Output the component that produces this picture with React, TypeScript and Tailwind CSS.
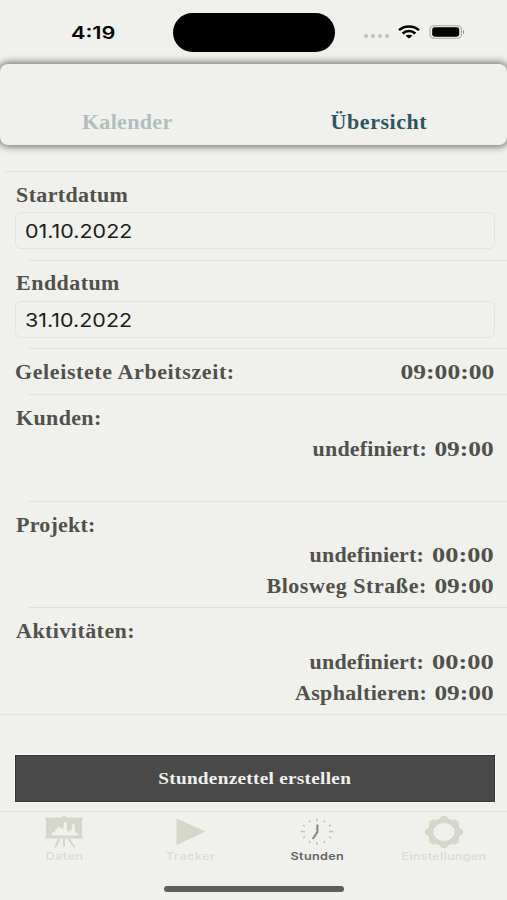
import type { ReactNode } from "react";
import clsx from "clsx";

interface Entry {
  name: string;
  nameClass: string;
  time: string;
  timeClass: string;
}

interface SummaryProps {
  title: string;
  titleClass: string;
  entries: Entry[];
}

interface DateRowProps {
  label: string;
  labelClass: string;
  value: string;
  first?: boolean;
}

interface TabProps {
  label: string;
  labelClass: string;
  active?: boolean;
  children: ReactNode;
}

const GEAR_TEETH = [0, 45, 90, 135, 180, 225, 270, 315];

function Divider({ first }: { first?: boolean }) {
  return <div className={clsx("h-px bg-[#e2e3de]", first ? "ml-1" : "ml-7")} />;
}

function StatusBar() {
  return (
    <div className="flex h-[63px] items-center">
      <div className="w-[173px] pl-[71px]">
        <span className="inline-block origin-left scale-x-[1.24] font-[Inter,sans-serif] text-[17.5px] leading-[26px] font-semibold text-black">
          4:19
        </span>
      </div>
      <div className="mt-[1px] h-[39px] w-[162px] rounded-full bg-black" />
      <div className="ml-[29px] flex gap-[3px] pt-[9px]">
        <span className="size-1 rounded-full bg-[#c0c1bd]" />
        <span className="size-1 rounded-full bg-[#c0c1bd]" />
        <span className="size-1 rounded-full bg-[#c0c1bd]" />
        <span className="size-1 rounded-full bg-[#c0c1bd]" />
      </div>
      <svg className="ml-[9px] h-[14px] w-[22px]" viewBox="0 0 22 14" fill="none" stroke="#000" strokeWidth="2.4">
        <path d="M1 5.2C6.5 .2 15.5 .2 21 5.2" />
        <path d="M4.6 8.5C8.2 5.2 13.8 5.2 17.4 8.5" />
        <path d="M11 13.4L7.6 10.8C9.5 9.3 12.5 9.3 14.4 10.8Z" fill="#000" stroke="none" />
      </svg>
      <svg className="ml-[9px] h-[14px] w-[37px]" viewBox="0 0 37 14">
        <rect x="1" y=".7" width="31.5" height="12.6" rx="4" fill="none" stroke="#a5a6a2" strokeWidth="1.1" />
        <rect x="3.2" y="2.3" width="27" height="9.4" rx="2.4" fill="#000" />
        <path d="M34 5v4c1.6-.6 1.6-3.4 0-4z" fill="#8e8f8b" />
      </svg>
    </div>
  );
}

function DateRow({ label, labelClass, value, first }: DateRowProps) {
  return (
    <section className="h-[88.5px]">
      <Divider first={first} />
      <div className="pt-[7.5px] pr-[12px] pl-[15px]">
        <h2 className={clsx("origin-left scale-x-110 pl-[1px] leading-[30px]", labelClass)}>{label}</h2>
        <div className="mt-[2.5px] flex h-[37px] items-center rounded-md border border-[#e3e4df] pt-[4px] pl-[9px]">
          <span className="origin-left scale-x-[1.13] font-[Inter,sans-serif] text-[19px] font-normal text-[#1c1c1a]">
            {value}
          </span>
        </div>
      </div>
    </section>
  );
}

function Summary({ title, titleClass, entries }: SummaryProps) {
  return (
    <section className="h-[106.7px]">
      <Divider />
      <div className="pt-2 pr-[13px] pl-[15px] leading-[30.6px]">
        <h2 className={clsx("origin-left scale-x-110 pl-[1px]", titleClass)}>{title}</h2>
        {entries.map((entry) => (
          <p key={entry.name} className="flex justify-end">
            <span className={clsx("origin-right scale-x-110", entry.nameClass)}>{entry.name}:</span>
            <span className={clsx("origin-right", entry.timeClass)}>{entry.time}</span>
          </p>
        ))}
      </div>
    </section>
  );
}

function Tab({ label, labelClass, active, children }: TabProps) {
  return (
    <div className="flex flex-1 flex-col items-center pt-1">
      {children}
      <span
        className={clsx(
          "scale-x-[1.15] font-[Inter,sans-serif] text-[11px] leading-[14px] font-semibold",
          active ? "text-[#65665a]" : "text-[#dcddd3]",
          labelClass,
        )}
      >
        {label}
      </span>
    </div>
  );
}

export default function App() {
  return (
    <div className="flex h-[900px] w-[507px] flex-col overflow-hidden bg-[#f0f1ec] font-['Liberation_Serif',serif] text-[20px] font-bold text-[#50514d]">
      <StatusBar />

      {/* Top tabs */}
      <div className="mt-[1px] flex h-[81px] shrink-0 items-end rounded-lg pb-[8px] shadow-[0_0_7px_2px_rgba(0,0,0,0.5)]">
        <div className="flex-1 pl-[2px] text-center leading-[30px] text-[#afbfbf]">
          <span className="inline-block scale-x-110 tracking-[0.3px]">Kalender</span>
        </div>
        <div className="flex-1 pr-[3px] text-center leading-[30px] text-[#2e5662]">
          <span className="inline-block scale-x-110 tracking-[0.5px]">Übersicht</span>
        </div>
      </div>

      <main className="mt-[26px]">
        <DateRow label="Startdatum" labelClass="tracking-[0.3px]" value="01.10.2022" first />
        <DateRow label="Enddatum" labelClass="tracking-[0.4px]" value="31.10.2022" />

        <section className="h-[46px]">
          <Divider />
          <div className="flex justify-between pt-2 pr-[13px] pl-[15px] leading-[30px]">
            <h2 className="origin-left scale-x-110 tracking-[0.55px]">Geleistete Arbeitszeit:</h2>
            <span className="origin-right scale-x-[1.28]">09:00:00</span>
          </div>
        </section>

        <Summary
          title="Kunden:"
          titleClass="tracking-[0.3px]"
          entries={[
            { name: "undefiniert", nameClass: "tracking-[0.15px]", time: "09:00", timeClass: "ml-[20px] scale-x-[1.27]" },
          ]}
        />
        <Summary
          title="Projekt:"
          titleClass="tracking-[0.2px]"
          entries={[
            { name: "undefiniert", nameClass: "tracking-[0.15px]", time: "00:00", timeClass: "ml-[23px] scale-x-[1.32]" },
            { name: "Blosweg Straße", nameClass: "tracking-[0.5px]", time: "09:00", timeClass: "ml-[20px] scale-x-[1.27]" },
          ]}
        />
        <Summary
          title="Aktivitäten:"
          titleClass="tracking-[0.4px]"
          entries={[
            { name: "undefiniert", nameClass: "tracking-[0.15px]", time: "00:00", timeClass: "ml-[23px] scale-x-[1.32]" },
            { name: "Asphaltieren", nameClass: "tracking-[0.3px]", time: "09:00", timeClass: "ml-[20px] scale-x-[1.27]" },
          ]}
        />
        <div className="h-px bg-[#e2e3de]" />
      </main>

      <button className="mt-[40px] mr-[12px] ml-[15px] h-[47px] shrink-0 border border-[#343434] bg-[#494949] text-[17.5px] text-[#f0f1ec] shadow-[0_0_0_1px_#fafaf8]">
        <span className="inline-block scale-x-110 tracking-[0.25px]">Stundenzettel erstellen</span>
      </button>

      {/* Bottom navigation */}
      <nav className="mt-[9px] flex h-[75px] shrink-0 border-t border-[#e2e3de] pl-[1px]">
        <Tab label="Daten" labelClass="tracking-[0.4px]">
          <svg className="h-[33px] w-[40px]" viewBox="0 0 40 33" fill="#d5d7c8">
            <path d="M18.5 0h3v2h-3zM1 1.5h38v2.3H1zM2 3.8h36v17.200H2zM1 20.5h38v2H1z" />
            <path d="M14 22.5h3l-5 9h-2zM23 22.5h3l5.500 9h-2zM19 22.5h2v8h-2z" />
            <path
              d="M7 19.5l1.5-3.500 2 .5 1-4 1.500 1 1.500-4 1.500 3 1.500-1.500 1.500 3.500 1-8.500h2.500l.5 8.500 2 2 1-3.500 1.500 2 1-7h2l.5 7.500 1.500 2 .8-1.500 1.700 3.500z"
              fill="#f0f1ec"
            />
          </svg>
        </Tab>
        <Tab label="Tracker" labelClass="tracking-[0.4px]">
          <svg className="h-[33px] w-[30px]" viewBox="0 0 30 33" fill="#d5d7c8">
            <path d="M.5 2.5L29.5 15.5 .5 29z" />
          </svg>
        </Tab>
        <Tab label="Stunden" labelClass="tracking-[0.3px]" active>
          <svg className="h-[33px] w-[36px]" viewBox="0 0 36 33" fill="none" stroke="#c3c4bb" strokeWidth="1.6">
            <path d="M18 2.500v3M18 26v3M1.500 15.500h4.500M30 15.500h4.500" />
            <path d="M10 4.500l1.200 1.800M26 4.500l-1.200 1.800M4 9.300l2 1M32 9.300l-2 1M4 21.800l2-1M32 21.800l-2-1M10 26.700l1.200-1.800M26 26.700l-1.200-1.800" />
            <path d="M18.4 8.500v7.500l-4.700 7" stroke="#8a8b80" strokeWidth="2.2" />
          </svg>
        </Tab>
        <Tab label="Einstellungen" labelClass="tracking-[0.15px]">
          <svg className="h-[33px] w-[40px]" viewBox="0 0 40 33">
            <g transform="translate(20 16) scale(1.2 1)">
              <circle r="11.1" fill="none" stroke="#d5d7c8" strokeWidth="4.4" />
              {GEAR_TEETH.map((angle) => (
                <path key={angle} d="M-5-12L-1.800-16H1.800L5-12z" fill="#d5d7c8" transform={`rotate(${angle})`} />
              ))}
            </g>
          </svg>
        </Tab>
      </nav>

      {/* Home indicator */}
      <div className="mx-auto h-[5.5px] w-[180px] shrink-0 rounded-full bg-[#5e5f5a]" />
    </div>
  );
}
